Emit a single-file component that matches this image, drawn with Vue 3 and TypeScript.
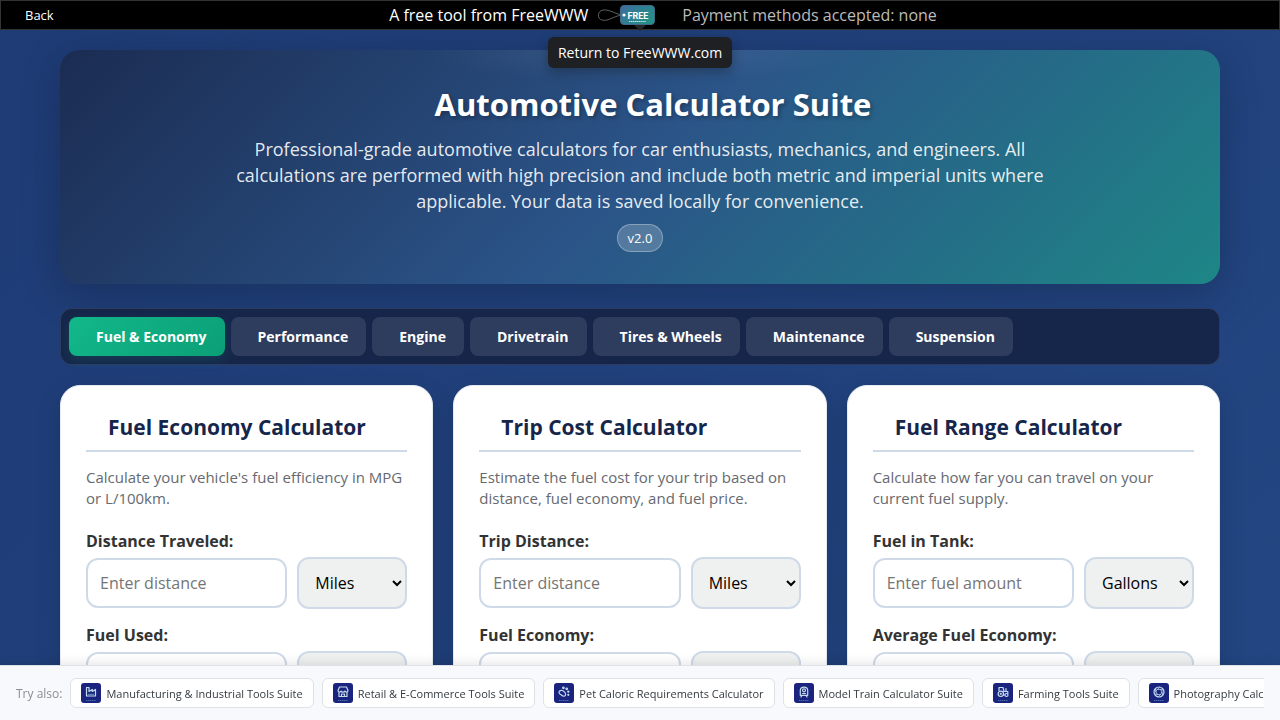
<script setup lang="ts">
import { ref } from 'vue'

interface Field {
  id: string
  label: string
  placeholder: string
  units: string[]
}
interface Calculator {
  title: string
  description: string
  fields: Field[]
}

const tabs = ['Fuel & Economy', 'Performance', 'Engine', 'Drivetrain', 'Tires & Wheels', 'Maintenance', 'Suspension']
const activeTab = ref('Fuel & Economy')

const calculators: Calculator[] = [
  {
    title: 'Fuel Economy Calculator',
    description: "Calculate your vehicle's fuel efficiency in MPG or L/100km.",
    fields: [
      { id: 'distance', label: 'Distance Traveled:', placeholder: 'Enter distance', units: ['Miles', 'Km'] },
      { id: 'fuel-used', label: 'Fuel Used:', placeholder: 'Enter fuel amount', units: ['Gallons', 'Liters'] },
    ],
  },
  {
    title: 'Trip Cost Calculator',
    description: 'Estimate the fuel cost for your trip based on distance, fuel economy, and fuel price.',
    fields: [
      { id: 'trip-distance', label: 'Trip Distance:', placeholder: 'Enter distance', units: ['Miles', 'Km'] },
      { id: 'trip-economy', label: 'Fuel Economy:', placeholder: 'Enter economy', units: ['MPG', 'L/100km'] },
    ],
  },
  {
    title: 'Fuel Range Calculator',
    description: 'Calculate how far you can travel on your current fuel supply.',
    fields: [
      { id: 'tank', label: 'Fuel in Tank:', placeholder: 'Enter fuel amount', units: ['Gallons', 'Liters'] },
      { id: 'avg-economy', label: 'Average Fuel Economy:', placeholder: 'Enter economy', units: ['MPG', 'L/100km'] },
    ],
  },
]

const suites = [
  { icon: 'factory', name: 'Manufacturing & Industrial Tools Suite' },
  { icon: 'store', name: 'Retail & E-Commerce Tools Suite' },
  { icon: 'paw', name: 'Pet Caloric Requirements Calculator' },
  { icon: 'train', name: 'Model Train Calculator Suite' },
  { icon: 'tractor', name: 'Farming Tools Suite' },
  { icon: 'aperture', name: 'Photography Calculator Suite' },
]
</script>

<template>
  <div class="page">
    <header class="topbar">
      <a class="back" href="#">Back</a>
      <div class="promo">
        <a class="brand" href="#" aria-describedby="brand-tip">
          <span>A free tool from FreeWWW</span>
          <svg class="tag" viewBox="0 0 60 24" aria-hidden="true">
            <defs>
              <linearGradient id="tagFill" x1="0" y1="0" x2="1" y2="0.6">
                <stop offset="0" stop-color="#3d6c9e" />
                <stop offset="1" stop-color="#249087" />
              </linearGradient>
            </defs>
            <path d="M28 12C20 12 14 6 7 7C1 8 1 16 6 17C13 19 18 12 28 12" fill="none" stroke="#74777a" stroke-width="0.8" />
            <rect x="24.5" y="2.5" width="34" height="19" rx="3.5" fill="url(#tagFill)" stroke="#416987" />
            <circle cx="28" cy="12" r="1.6" fill="#fff" />
            <text x="42" y="15.5" text-anchor="middle" class="tag-word">FREE</text>
            <path d="M33 18.5H50" stroke="#c2dde3" stroke-width="1.2" stroke-dasharray="1.5 0.4" />
          </svg>
          <span id="brand-tip" class="tooltip" role="tooltip">Return to FreeWWW.com</span>
        </a>
        <span class="payment">Payment methods accepted: none</span>
      </div>
    </header>

    <main class="container">
      <section class="hero">
        <h1>Automotive Calculator Suite</h1>
        <p>
          Professional-grade automotive calculators for car enthusiasts, mechanics, and engineers. All calculations are
          performed with high precision and include both metric and imperial units where applicable. Your data is saved
          locally for convenience.
        </p>
        <span class="version">v2.0</span>
      </section>

      <nav class="tabs" aria-label="Calculator categories">
        <button
          v-for="tab in tabs"
          :key="tab"
          type="button"
          class="tab"
          :class="{ active: tab === activeTab }"
          @click="activeTab = tab"
        >
          {{ tab }}
        </button>
      </nav>

      <div class="cards">
        <section v-for="calc in calculators" :key="calc.title" class="card">
          <h2>{{ calc.title }}</h2>
          <p class="description">{{ calc.description }}</p>
          <div v-for="field in calc.fields" :key="field.id" class="field">
            <label :for="field.id">{{ field.label }}</label>
            <div class="controls">
              <input :id="field.id" type="text" inputmode="decimal" :placeholder="field.placeholder" />
              <select :aria-label="field.label + ' unit'">
                <option v-for="unit in field.units" :key="unit">{{ unit }}</option>
              </select>
            </div>
          </div>
        </section>
      </div>
    </main>

    <footer class="related">
      <span class="related-label">Try also:</span>
      <div class="related-list">
        <a v-for="suite in suites" :key="suite.name" class="related-link" href="#">
          <svg class="suite-icon" viewBox="0 0 20 20" aria-hidden="true">
            <rect width="20" height="20" rx="3" fill="#1a237e" />
            <g fill="none" stroke="#c3dcec" stroke-width="1.2" stroke-linejoin="round" stroke-linecap="round">
              <template v-if="suite.icon === 'factory'">
                <path d="M5.5 13V4.5H8V8.5L11.3 6.5V8.5L14.5 6.5V13Z" />
                <path d="M7.5 11.3H12.5" stroke="#4d83ad" />
              </template>
              <template v-else-if="suite.icon === 'store'">
                <path d="M6.5 4H13.5L15 7.5C15 9.5 12.5 9.5 12 8C11.5 9.5 8.5 9.5 8 8C7.5 9.5 5 9.5 5 7.5Z" />
                <path d="M6 9.5V13.5H14V9.5 M8.5 13.5V11H11.5V13.5" />
              </template>
              <template v-else-if="suite.icon === 'paw'">
                <path d="M5.5 8.2C7 6.5 9.5 7.5 11 9.5C12.5 12 11 13.8 9 13C7.5 12.5 7.5 12 6.3 11.3C5 10.5 4.7 9.3 5.5 8.2Z" />
                <circle cx="9.4" cy="4.8" r="0.8" />
                <circle cx="12.7" cy="5.8" r="0.8" />
                <circle cx="14.3" cy="8.6" r="0.6" />
                <circle cx="14.3" cy="11.8" r="0.5" />
              </template>
              <template v-else-if="suite.icon === 'train'">
                <path d="M6.3 12.3V7.5C6.3 3 13.7 3 13.7 7.5V12.3Z M7 14L8 12.3M13 14L12 12.3" />
                <circle cx="10" cy="7.3" r="1.5" />
                <path d="M8.5 10.5H11.5" />
              </template>
              <template v-else-if="suite.icon === 'tractor'">
                <circle cx="7.8" cy="10.8" r="2.7" />
                <circle cx="13.5" cy="12" r="1.5" />
                <path d="M6 7.5V4.5H10L11 8.5H14.8V10.5 M13 8V5.5 M10.5 12H11.8" />
                <circle cx="7.8" cy="10.8" r="0.5" />
              </template>
              <template v-else>
                <circle cx="10" cy="9" r="5" />
                <path d="M8.5 6.4H11.5L13 9L11.5 11.6H8.5L7 9Z M8.5 6.4L10.5 4.2M11.5 6.4L14.3 7.2M13 9L13.6 12M11.5 11.6L9.5 13.8M8.5 11.6L5.7 10.8M7 9L6.4 6" stroke-width="0.8" />
              </template>
            </g>
            <path d="M5 17.5H15" stroke="#4d83ad" stroke-width="0.8" stroke-dasharray="1.5 0.5" />
          </svg>
          {{ suite.name }}
        </a>
      </div>
    </footer>
  </div>
</template>

<style>
html {
  scrollbar-width: none;
}
body {
  margin: 0;
}
</style>

<style scoped>
* {
  box-sizing: border-box;
}
.page {
  min-height: 100vh;
  padding-bottom: 56px;
  background: linear-gradient(135deg, #1e3b75, #234682) fixed;
  color: #333;
  font-family: 'Open Sans', 'Noto Sans', sans-serif;
}
.topbar {
  position: sticky;
  top: 0;
  z-index: 5;
  display: grid;
  grid-template-columns: 1fr auto 1fr;
  align-items: center;
  height: 30px;
  padding: 0 24px;
  border: 1px solid #333;
  background: #000;
  color: #fff;
}
.back {
  justify-self: start;
  color: #fff;
  font-size: 13px;
  line-height: 20px;
  text-decoration: none;
}
.promo {
  display: flex;
  align-items: center;
  gap: 26px;
  margin-right: -46px;
  font-size: 16px;
  line-height: 24px;
}
.brand {
  position: relative;
  display: flex;
  align-items: center;
  gap: 8px;
  color: #fff;
  text-decoration: none;
}
.tag {
  width: 60px;
  height: 24px;
}
.tag-word {
  fill: #fff;
  font: 700 9px 'Roboto', sans-serif;
}
.payment {
  color: #bbb;
}
.tooltip {
  position: absolute;
  top: 34px;
  right: -76px;
  padding: 6px 10px;
  border-radius: 6px;
  background: #1f2024;
  box-shadow: 0 4px 12px rgba(0, 0, 0, 0.3);
  font-size: 14px;
  line-height: 19px;
  white-space: nowrap;
}
.tooltip::before {
  content: '';
  position: absolute;
  top: -12px;
  left: 50%;
  border: 6px solid transparent;
  border-top-color: #26272a;
  transform: translateX(-50%);
}
.container {
  max-width: 1200px;
  margin: 0 auto;
  padding: 20px;
}
.hero {
  padding: 32px 40px;
  border-radius: 20px;
  background:
    radial-gradient(ellipse 220px 32px at 50% 0, rgba(255, 255, 255, 0.08), transparent),
    linear-gradient(135deg, #1b2c52 0%, #2b5488 50%, #1e8686 100%);
  box-shadow: 0 10px 40px rgba(0, 0, 0, 0.2);
  color: #fff;
  text-align: center;
}
h1 {
  margin: 0 0 10px;
  padding-left: 26px;
  font-size: 31px;
  line-height: 44px;
  text-shadow: 2px 2px 4px rgba(0, 0, 0, 0.3);
}
.hero p {
  max-width: 820px;
  margin: 0 auto 10px;
  color: rgba(255, 255, 255, 0.9);
  font-size: 18px;
  line-height: 26px;
}
.version {
  display: inline-block;
  padding: 4px 10px;
  border: 1px solid rgba(255, 255, 255, 0.3);
  border-radius: 14px;
  background: rgba(255, 255, 255, 0.2);
  font-size: 13px;
  line-height: 18px;
}
.tabs {
  display: flex;
  flex-wrap: wrap;
  gap: 6px;
  margin: 24px 0 20px;
  padding: 8px;
  border: 1px solid rgba(255, 255, 255, 0.1);
  border-radius: 12px;
  background: #16264b;
}
.tab {
  padding: 10px 18px 10px 27px;
  border: 0;
  border-radius: 8px;
  background: #2e3c5d;
  color: #fff;
  font: 700 14px/19px 'Open Sans', 'Noto Sans', sans-serif;
}
.tab.active {
  background: linear-gradient(135deg, #12b88a, #0c9f76);
  box-shadow: 0 4px 12px rgba(16, 185, 129, 0.15);
}
.cards {
  display: grid;
  grid-template-columns: repeat(3, 1fr);
  gap: 20px;
}
.card {
  min-width: 0;
  padding: 25px;
  border: 1px solid #e6ebf2;
  border-radius: 20px;
  background: #fff;
  box-shadow: 0 8px 24px rgba(0, 0, 0, 0.15);
}
h2 {
  margin: 0 0 15px;
  padding: 2px 0 8px 22px;
  border-bottom: 2px solid #cfdae8;
  color: #16264b;
  font-size: 21px;
  line-height: 29px;
}
.description {
  margin: 0 0 21px;
  color: #666a70;
  font-size: 15px;
  line-height: 21px;
}
.field {
  margin-bottom: 15px;
}
label {
  display: block;
  margin-bottom: 5px;
  font-size: 16px;
  font-weight: 700;
  line-height: 22px;
}
.controls {
  display: flex;
  align-items: center;
  gap: 10px;
}
input,
select {
  border: 2px solid #cfdae8;
  border-radius: 12px;
  font: 16px/22px 'Open Sans', 'Noto Sans', sans-serif;
}
input {
  flex: 1;
  min-width: 0;
  height: 50px;
  padding: 12px;
  background: #fff;
}
input::placeholder {
  color: #757575;
}
select {
  width: 110px;
  height: 52px;
  padding: 0 0 0 12px;
  background: #eff0f0;
  color: #000;
}
.related {
  position: fixed;
  right: 0;
  bottom: 0;
  left: 0;
  z-index: 4;
  display: flex;
  align-items: center;
  gap: 8px;
  padding: 12px 16px;
  border-top: 1px solid #dee2e6;
  background: #f8f9fc;
  box-shadow: 0 -2px 10px rgba(0, 0, 0, 0.1);
  font-size: 12px;
}
.related-label {
  flex: none;
  color: #868e96;
}
.related-list {
  display: flex;
  gap: 8px;
  overflow: hidden;
}
.related-link {
  display: flex;
  flex: none;
  align-items: center;
  gap: 5px;
  height: 30px;
  padding: 0 10px;
  border: 1px solid #dee2e6;
  border-radius: 6px;
  background: #fff;
  color: #343a40;
  font-size: 11px;
  text-decoration: none;
  white-space: nowrap;
}
.suite-icon {
  width: 20px;
  height: 20px;
}
</style>
